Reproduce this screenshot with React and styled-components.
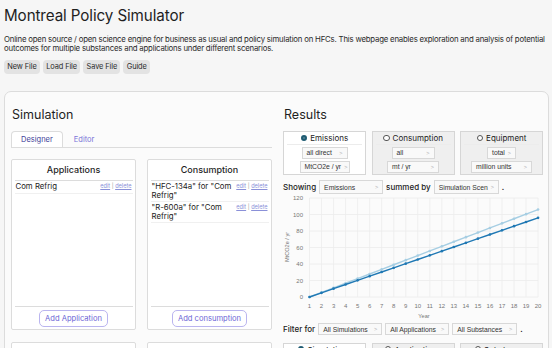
import React from "react";
import styled, { createGlobalStyle } from "styled-components";

const GlobalStyle = createGlobalStyle`
  html, body {
    margin: 0;
    padding: 0;
    background: #f6f6f6;
    overflow: hidden;
  }
  body {
    font-family: Inter, "Noto Sans", sans-serif;
    color: #1f1f1f;
  }
`;

const Page = styled.div`
  width: 552px;
  height: 348px;
  overflow: hidden;
  box-sizing: border-box;
  padding: 0 3px 0 4px;
`;

const Title = styled.h1`
  margin: 0;
  padding-top: 7px;
  font-size: 15.2px;
  line-height: 18px;
  font-weight: 400;
  letter-spacing: -0.1px;
`;

const Intro = styled.p`
  margin: 10px 0 0;
  font-size: 7.8px;
  line-height: 9.4px;
  letter-spacing: -0.2px;
  color: #2a2a2a;
  white-space: nowrap;
`;

const Toolbar = styled.div`
  display: flex;
  gap: 3px;
  margin-top: 6px;
`;

const ToolButton = styled.button`
  height: 14px;
  padding: 0 3.3px;
  border: none;
  border-radius: 4px;
  background: #e3e3e3;
  font-family: inherit;
  font-size: 7.4px;
  letter-spacing: -0.1px;
  color: #2a2a2a;
`;

const Panel = styled.div`
  margin-top: 17px;
  border: 1px solid #dcdcdc;
  border-radius: 7px;
  background: #fbfbfb;
  padding: 15.5px 5px 0 6px;
  display: grid;
  grid-template-columns: 261px 260px;
  column-gap: 11px;
  height: 300px;
`;

const Column = styled.div`
  display: flex;
  flex-direction: column;
`;

const Heading = styled.h2`
  margin: 0;
  padding-left: 1px;
  font-size: 12.5px;
  line-height: 16px;
  font-weight: 400;
`;

const TabBar = styled.div`
  display: flex;
  margin-top: 8px;
  height: 16px;
  border-bottom: 1px solid #dcdcdc;
`;

const Tab = styled.div`
  padding: 0 9px;
  margin-right: 1px;
  line-height: 15px;
  font-size: 7.5px;
  color: ${(p) => (p.$active ? "#3f3f99" : "#7a74d8")};
  background: ${(p) => (p.$active ? "#fff" : "transparent")};
  border: 1px solid ${(p) => (p.$active ? "#dcdcdc" : "transparent")};
  border-bottom: none;
  border-radius: 4px 4px 0 0;
  margin-bottom: -1px;
  height: 16px;
  box-sizing: border-box;
`;

const CardGrid = styled.div`
  display: grid;
  grid-template-columns: 125px 125px;
  grid-auto-rows: 171px;
  column-gap: 11px;
  row-gap: 11.5px;
  margin-top: 11px;
`;

const Card = styled.div`
  display: flex;
  flex-direction: column;
  background: #fff;
  border: 1px solid #dcdcdc;
  border-radius: 2px;
  padding: 0 2.5px;
  box-sizing: border-box;
`;

const CardHeader = styled.div`
  height: 20px;
  line-height: 20px;
  text-align: center;
  font-size: 9px;
  font-weight: 500;
  border-bottom: 1px solid #dcdcdc;
`;

const Row = styled.div`
  display: flex;
  justify-content: space-between;
  align-items: flex-start;
  padding: 1px 1px 1.5px;
  border-bottom: 1px solid #f0f0f0;
`;

const RowName = styled.div`
  font-size: 7.8px;
  line-height: 8.7px;
  color: #222;
  max-width: 80px;
`;

const RowLinks = styled.div`
  font-size: 5.6px;
  line-height: 8.7px;
  color: #9a9a9a;
  white-space: nowrap;
  a {
    color: #8a90d8;
    text-decoration: underline;
  }
`;

const Spacer = styled.div`
  flex: 1;
`;

const CardFooter = styled.div`
  display: flex;
  justify-content: center;
  border-top: 1px solid #dcdcdc;
  padding: 3px 0 2.5px;
`;

const OutlineButton = styled.button`
  height: 17px;
  padding: 0 5px;
  border: 1px solid #bab5ef;
  border-radius: 5px;
  background: #fff;
  color: #6d66d6;
  font-family: inherit;
  font-size: 7.6px;
`;

const ModeGrid = styled.div`
  display: grid;
  grid-template-columns: repeat(3, 83px);
  column-gap: 5.5px;
  margin-top: ${(p) => p.$top || 0}px;
`;

const ModeBox = styled.div`
  height: 43.5px;
  box-sizing: border-box;
  border: 1px solid #d6d6d6;
  background: ${(p) => (p.$active ? "#fff" : "#efefef")};
  display: flex;
  flex-direction: column;
  align-items: center;
  gap: 1.7px;
`;

const ModeLabel = styled.div`
  align-self: stretch;
  margin: 0 3px;
  display: flex;
  justify-content: center;
  align-items: center;
  gap: 3px;
  height: 11.5px;
  border-bottom: 1px solid #ececec;
  font-size: 8px;
  color: #222;
`;

const Radio = styled.span`
  width: 6.5px;
  height: 6.5px;
  box-sizing: border-box;
  border-radius: 50%;
  border: ${(p) => (p.$checked ? "2px solid #1e5b72" : "1px solid #555")};
  background: #fff;
  box-shadow: ${(p) => (p.$checked ? "inset 0 0 0 0.9px #1e5b72" : "none")};
`;

const Select = styled.div`
  display: inline-flex;
  align-items: center;
  justify-content: space-between;
  box-sizing: border-box;
  width: ${(p) => p.$w}px;
  height: ${(p) => p.$h || 12.5}px;
  padding: 0 4px;
  border: 1px solid #d8d8d8;
  background: #f9f9f9;
  font-family: "Liberation Sans", Arial, sans-serif;
  font-size: 6.8px;
  color: #333;
  white-space: nowrap;
  overflow: hidden;
  &::after {
    content: ">";
    color: #b0b0b0;
    font-size: 5.5px;
    margin-left: 3px;
  }
`;

const SentenceRow = styled.div`
  display: flex;
  align-items: center;
  gap: 3px;
  height: 13.5px;
  margin-top: ${(p) => p.$top || 0}px;
  font-size: 8px;
  font-weight: 500;
  color: #222;
`;

const Chart = styled.svg`
  display: block;
  margin-top: 0.5px;
  font-family: "Liberation Sans", Arial, sans-serif;
`;

const years = Array.from({ length: 20 }, (_, i) => i + 1);
const px = (yr) => 26.5 + (yr - 1) * 12.03;
const py = (v) => 103 - v * 0.825;
const series = [
  { color: "#a6cee3", rate: 5.58 },
  { color: "#1f78b4", rate: 5.05 },
];

function EmissionsChart() {
  return (
    <Chart width="260" height="128" viewBox="0 0 260 128">
      {years.map((y) => (
        <line key={"v" + y} x1={px(y)} x2={px(y)} y1={4} y2={103} stroke="#ececec" strokeWidth="0.8" />
      ))}
      {[0, 20, 40, 60, 80, 100, 120].map((v) => (
        <g key={"h" + v}>
          <line x1={px(1)} x2={px(20)} y1={py(v)} y2={py(v)} stroke="#ececec" strokeWidth="0.8" />
          <text x={20} y={py(v) + 2} fontSize="6" fill="#777" textAnchor="end">
            {v}
          </text>
        </g>
      ))}
      {years.map((y) => (
        <text key={"t" + y} x={px(y)} y={114} fontSize="6" fill="#777" textAnchor="middle">
          {y}
        </text>
      ))}
      <text x={141} y={124} fontSize="5.6" fill="#777" textAnchor="middle">
        Year
      </text>
      <text x={5.5} y={53} fontSize="5.6" fill="#777" textAnchor="middle" transform="rotate(-90 5.5 53)">
        MtCO2e / yr
      </text>
      {series.map((s) => (
        <g key={s.color}>
          <polyline
            points={years.map((y) => `${px(y)},${py((y - 1) * s.rate)}`).join(" ")}
            fill="none"
            stroke={s.color}
            strokeWidth="1.4"
          />
          {years.map((y) => (
            <circle key={y} cx={px(y)} cy={py((y - 1) * s.rate)} r="1.3" fill={s.color} />
          ))}
        </g>
      ))}
    </Chart>
  );
}

function ItemRow({ name }) {
  return (
    <Row>
      <RowName>{name}</RowName>
      <RowLinks>
        <a>edit</a> | <a>delete</a>
      </RowLinks>
    </Row>
  );
}

export default function App() {
  return (
    <Page>
      <GlobalStyle />
      <Title>Montreal Policy Simulator</Title>
      <Intro>
        Online open source / open science engine for business as usual and policy simulation on HFCs. This webpage enables exploration and analysis of potential
        <br />
        outcomes for multiple substances and applications under different scenarios.
      </Intro>
      <Toolbar>
        <ToolButton>New File</ToolButton>
        <ToolButton>Load File</ToolButton>
        <ToolButton>Save File</ToolButton>
        <ToolButton>Guide</ToolButton>
      </Toolbar>

      <Panel>
        <Column>
          <Heading>Simulation</Heading>
          <TabBar>
            <Tab $active>Designer</Tab>
            <Tab>Editor</Tab>
          </TabBar>
          <CardGrid>
            <Card>
              <CardHeader>Applications</CardHeader>
              <ItemRow name="Com Refrig" />
              <Spacer />
              <CardFooter>
                <OutlineButton>Add Application</OutlineButton>
              </CardFooter>
            </Card>
            <Card>
              <CardHeader>Consumption</CardHeader>
              <ItemRow name={'"HFC-134a" for "Com Refrig"'} />
              <ItemRow name={'"R-600a" for "Com Refrig"'} />
              <Spacer />
              <CardFooter>
                <OutlineButton>Add consumption</OutlineButton>
              </CardFooter>
            </Card>
            <Card />
            <Card />
          </CardGrid>
        </Column>

        <Column>
          <Heading>Results</Heading>
          <ModeGrid $top={8}>
            <ModeBox $active>
              <ModeLabel>
                <Radio $checked />
                Emissions
              </ModeLabel>
              <Select $w={46}>all direct</Select>
              <Select $w={50}>MtCO2e / yr</Select>
            </ModeBox>
            <ModeBox>
              <ModeLabel>
                <Radio />
                Consumption
              </ModeLabel>
              <Select $w={43}>all</Select>
              <Select $w={52}>mt / yr</Select>
            </ModeBox>
            <ModeBox>
              <ModeLabel>
                <Radio />
                Equipment
              </ModeLabel>
              <Select $w={29}>total</Select>
              <Select $w={61}>million units</Select>
            </ModeBox>
          </ModeGrid>

          <SentenceRow $top={5.5}>
            Showing
            <Select $w={64} $h={13.5}>Emissions</Select>
            summed by
            <Select $w={65} $h={13.5}>Simulation Scen</Select>
            .
          </SentenceRow>

          <EmissionsChart />

          <SentenceRow>
            Filter for
            <Select $w={64} $h={12}>All Simulations</Select>
            <Select $w={64} $h={12}>All Applications</Select>
            <Select $w={65} $h={12}>All Substances</Select>
            .
          </SentenceRow>

          <ModeGrid $top={7}>
            <ModeBox $active>
              <ModeLabel>
                <Radio $checked />
                Simulations
              </ModeLabel>
            </ModeBox>
            <ModeBox>
              <ModeLabel>
                <Radio />
                Applications
              </ModeLabel>
            </ModeBox>
            <ModeBox>
              <ModeLabel>
                <Radio />
                Substances
              </ModeLabel>
            </ModeBox>
          </ModeGrid>
        </Column>
      </Panel>
    </Page>
  );
}
